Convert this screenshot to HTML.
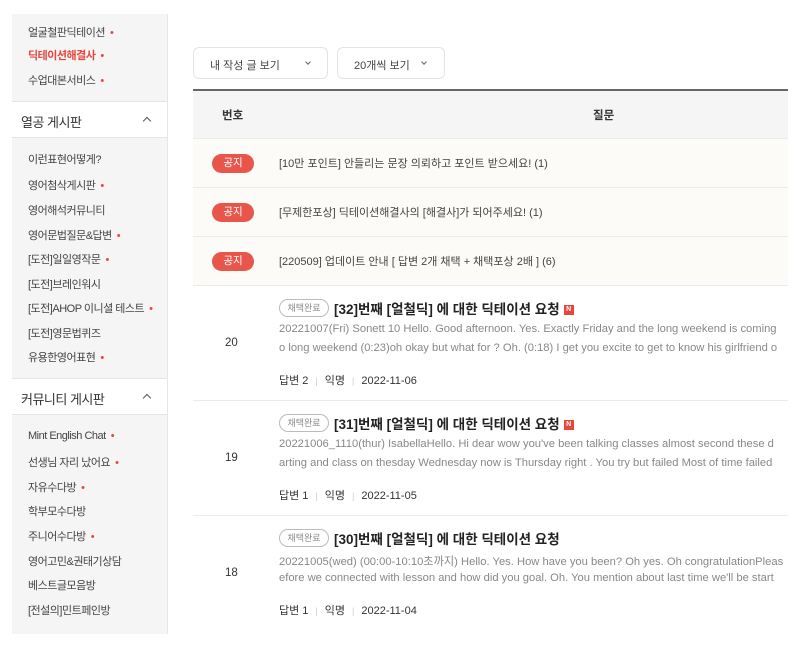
<!DOCTYPE html>
<html><head><meta charset="utf-8"><style>
*{margin:0;padding:0;box-sizing:border-box}
body{width:800px;height:648px;background:#fff;font-family:"Liberation Sans","Noto Sans CJK KR",sans-serif;position:relative;overflow:hidden;color:#333}
.side{position:absolute;left:12px;top:14px;width:156px;height:620px;background:#f5f5f5;border-right:1px solid #e6e6e6}
.it{position:absolute;left:16px;font-size:11px;color:#444;letter-spacing:-0.5px;white-space:nowrap}
.it b{color:#e8463d;font-weight:normal;margin-left:5px}
.hd{position:absolute;left:0;width:155px;height:37px;background:#fff;border-top:1px solid #e4e4e4;border-bottom:1px solid #e4e4e4;font-size:13px;color:#333;padding:10px 0 0 9px;letter-spacing:-0.5px}
.hd i{position:absolute;right:17px;top:16px;width:6px;height:6px;border-left:1.3px solid #555;border-top:1.3px solid #555;transform:rotate(45deg)}
.btn{position:absolute;top:47px;height:32px;border:1px solid #e3e3e3;border-radius:6px;font-size:11px;color:#444;padding:9px 0 0 16px}
.btn i{position:absolute;top:12px;width:4px;height:4px;border-right:1px solid #666;border-bottom:1px solid #666;transform:rotate(45deg)}
.tbl{position:absolute;left:193px;top:89px;width:595px;border-top:2px solid #666}
.th{height:47px;background:#f5f5f5;position:relative;font-size:11.5px;color:#333;font-weight:bold}
.nt{height:49px;background:#fcfbf8;border-top:1px solid #ebebeb;position:relative}
.pill{position:absolute;left:19px;top:15px;width:42px;height:19px;border-radius:10px;background:#e8554b;color:#fff;font-size:10.5px;text-align:center;line-height:19px}
.nt span{position:absolute;left:86px;top:16px;font-size:11px;color:#444;white-space:nowrap}
.row{height:115px;border-top:1px solid #ebebeb;position:relative;overflow:hidden}
.num{position:absolute;left:32px;top:51px;font-size:11.5px;color:#333}
.badge{position:absolute;left:86px;top:13px;width:50px;height:18px;border:1px solid #bbb;border-radius:9px;font-size:9px;color:#888;text-align:center;line-height:16px}
.ttl{position:absolute;left:141px;top:12px;font-size:13.5px;font-weight:bold;color:#222;white-space:nowrap}
.ttl em{display:inline-block;width:10px;height:10px;background:#e8463d;color:#fff;font-size:7px;font-style:normal;text-align:center;line-height:10px;vertical-align:middle;margin-left:4px}
.tx{position:absolute;left:86px;font-size:11.2px;color:#888;white-space:nowrap}
.meta{position:absolute;left:86px;top:86px;font-size:11px;color:#333;white-space:nowrap}
.meta s{text-decoration:none;color:#ccc;margin:0 7px;font-size:9px}
</style></head><body>
<div class="side">
<div class="it" style="top:10px">얼굴철판딕테이션<b>•</b></div>
<div class="it" style="top:33px;color:#e8463d;font-weight:bold">딕테이션해결사<b>•</b></div>
<div class="it" style="top:58px">수업대본서비스<b>•</b></div>
<div class="hd" style="top:87px">열공 게시판<i></i></div>
<div class="it" style="top:137px">이런표현어떻게?</div>
<div class="it" style="top:163px">영어첨삭게시판<b>•</b></div>
<div class="it" style="top:188px">영어해석커뮤니티</div>
<div class="it" style="top:213px">영어문법질문&amp;답변<b>•</b></div>
<div class="it" style="top:237px">[도전]일일영작문<b>•</b></div>
<div class="it" style="top:262px">[도전]브레인워시</div>
<div class="it" style="top:286px">[도전]AHOP 이니셜 테스트<b>•</b></div>
<div class="it" style="top:311px">[도전]영문법퀴즈</div>
<div class="it" style="top:335px">유용한영어표현<b>•</b></div>
<div class="hd" style="top:364px">커뮤니티 게시판<i></i></div>
<div class="it" style="top:416px">Mint English Chat<b>•</b></div>
<div class="it" style="top:440px">선생님 자리 났어요<b>•</b></div>
<div class="it" style="top:465px">자유수다방<b>•</b></div>
<div class="it" style="top:489px">학부모수다방</div>
<div class="it" style="top:514px">주니어수다방<b>•</b></div>
<div class="it" style="top:539px">영어고민&amp;권태기상담</div>
<div class="it" style="top:563px">베스트글모음방</div>
<div class="it" style="top:588px">[전설의]민트페인방</div>
</div>
<div class="btn" style="left:193px;width:135px">내 작성 글 보기<i style="left:112px"></i></div>
<div class="btn" style="left:337px;width:108px">20개씩 보기<i style="left:84px"></i></div>
<div class="tbl">
<div class="th"><span style="position:absolute;left:29px;top:16px">번호</span><span style="position:absolute;left:400px;top:16px">질문</span></div>
<div class="nt"><div class="pill">공지</div><span>[10만 포인트] 안들리는 문장 의뢰하고 포인트 받으세요! (1)</span></div>
<div class="nt"><div class="pill">공지</div><span>[무제한포상] 딕테이션해결사의 [해결사]가 되어주세요! (1)</span></div>
<div class="nt"><div class="pill">공지</div><span>[220509] 업데이트 안내 [ 답변 2개 채택 + 채택포상 2배 ] (6)</span></div>
<div class="row"><div class="num">20</div><div class="badge">채택완료</div><div class="ttl">[32]번째 [얼철딕] 에 대한 딕테이션 요청<em>N</em></div>
<div class="tx" style="top:37px">20221007(Fri) Sonett 10 Hello. Good afternoon. Yes. Exactly Friday and the long weekend is coming</div>
<div class="tx" style="top:56px">o long weekend (0:23)oh okay but what for ? Oh. (0:18) I get you excite to get to know his girlfriend o</div>
<div class="meta">답변 2<s>|</s>익명<s>|</s>2022-11-06</div></div>
<div class="row"><div class="num">19</div><div class="badge">채택완료</div><div class="ttl">[31]번째 [얼철딕] 에 대한 딕테이션 요청<em>N</em></div>
<div class="tx" style="top:37px">20221006_1110(thur) IsabellaHello. Hi dear wow you've been talking classes almost second these d</div>
<div class="tx" style="top:56px">arting and class on thesday Wednesday now is Thursday right . You try but failed Most of time failed</div>
<div class="meta">답변 1<s>|</s>익명<s>|</s>2022-11-05</div></div>
<div class="row"><div class="num">18</div><div class="badge">채택완료</div><div class="ttl">[30]번째 [얼철딕] 에 대한 딕테이션 요청</div>
<div class="tx" style="top:37px">20221005(wed) (00:00-10:10초까지) Hello. Yes. How have you been? Oh yes. Oh congratulationPleas</div>
<div class="tx" style="top:56px">efore we connected with lesson and how did you goal. Oh. You mention about last time we'll be start</div>
<div class="meta">답변 1<s>|</s>익명<s>|</s>2022-11-04</div></div>
</div>
</body></html>
